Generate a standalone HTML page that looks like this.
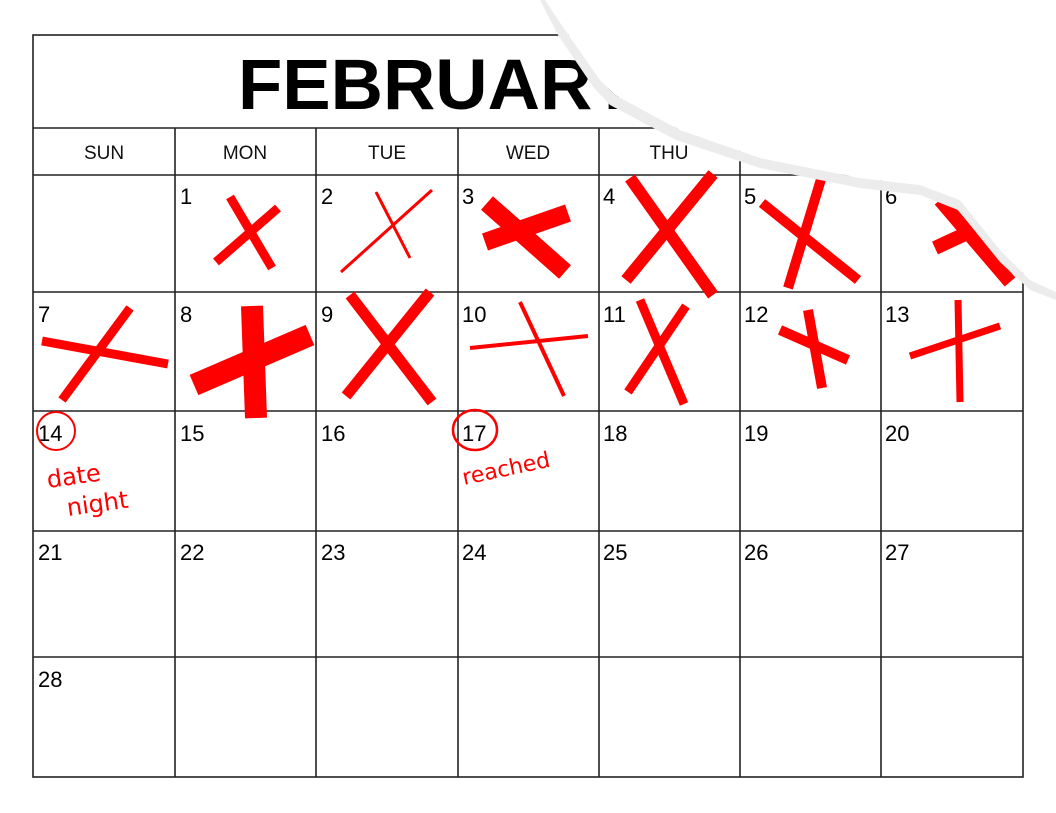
<!DOCTYPE html>
<html><head><meta charset="utf-8"><style>
html,body{margin:0;padding:0;background:#fff;width:1056px;height:813px;overflow:hidden}
svg{display:block}
</style></head><body>
<svg width="1056" height="813" viewBox="0 0 1056 813" xmlns="http://www.w3.org/2000/svg" font-family="Liberation Sans, Arial, sans-serif">
<rect width="1056" height="813" fill="#fff"/>
<g stroke="#222" stroke-width="1.6" fill="none">
<rect x="33" y="35" width="990" height="742"/>
<line x1="33" y1="128" x2="1023" y2="128"/>
<line x1="33" y1="175" x2="1023" y2="175"/>
<line x1="33" y1="292" x2="1023" y2="292"/>
<line x1="33" y1="411" x2="1023" y2="411"/>
<line x1="33" y1="531" x2="1023" y2="531"/>
<line x1="33" y1="657" x2="1023" y2="657"/>
<line x1="175" y1="128" x2="175" y2="777"/>
<line x1="316" y1="128" x2="316" y2="777"/>
<line x1="458" y1="128" x2="458" y2="777"/>
<line x1="599" y1="128" x2="599" y2="777"/>
<line x1="740" y1="128" x2="740" y2="777"/>
<line x1="881" y1="128" x2="881" y2="777"/>
</g>
<text x="238" y="109" font-size="71" font-weight="bold" fill="#000" textLength="400" lengthAdjust="spacingAndGlyphs">FEBRUARY</text>
<g font-size="19" text-anchor="middle" fill="#111">
<text x="104" y="159">SUN</text><text x="245" y="159">MON</text><text x="387" y="159">TUE</text><text x="528" y="159">WED</text><text x="669" y="159">THU</text><text x="810" y="159">FRI</text><text x="952" y="159">SAT</text>
</g>
<g font-size="22" fill="#000">
<text x="180" y="204">1</text><text x="321" y="204">2</text><text x="462" y="204">3</text><text x="603" y="204">4</text><text x="744" y="204">5</text><text x="885" y="204">6</text>
<text x="38" y="322">7</text><text x="180" y="322">8</text><text x="321" y="322">9</text><text x="462" y="322">10</text><text x="603" y="322">11</text><text x="744" y="322">12</text><text x="885" y="322">13</text>
<text x="38" y="441">14</text><text x="180" y="441">15</text><text x="321" y="441">16</text><text x="462" y="441">17</text><text x="603" y="441">18</text><text x="744" y="441">19</text><text x="885" y="441">20</text>
<text x="38" y="560">21</text><text x="180" y="560">22</text><text x="321" y="560">23</text><text x="462" y="560">24</text><text x="603" y="560">25</text><text x="744" y="560">26</text><text x="885" y="560">27</text>
<text x="38" y="687">28</text>
</g>
<g stroke="#f00" stroke-linecap="butt" fill="none">
<path d="M230 197 L272 268 M278 208 L216 262" stroke-width="9"/>
<path d="M376 192 L410 258 M432 190 L341 272" stroke-width="3"/>
<path d="M487 203 L565 272 M568 213 L485 242" stroke-width="18"/>
<path d="M630 178 L713 295 M713 174 L626 280" stroke-width="12"/>
<path d="M762 203 L858 280 M822 176 L788 288" stroke-width="10"/>
<path d="M940 200 L1010 282 M935 248 L978 228" stroke-width="14"/>
<path d="M42 341 L168 364 M130 308 L62 400" stroke-width="9"/>
<path d="M252 306 L256 418 M194 385 L310 335" stroke-width="22"/>
<path d="M350 295 L432 402 M430 292 L346 396" stroke-width="11"/>
<path d="M470 348 L588 336 M520 302 L564 396" stroke-width="4"/>
<path d="M640 300 L684 404 M686 306 L628 392" stroke-width="9"/>
<path d="M780 330 L848 360 M808 310 L822 388" stroke-width="10"/>
<path d="M910 356 L1000 326 M958 300 L960 402" stroke-width="7"/>
<circle cx="56" cy="431" r="19" stroke-width="2"/>
<ellipse cx="475" cy="430" rx="22" ry="20" stroke-width="2.5"/>
</g>
<g fill="#f00" font-family="DejaVu Sans, sans-serif" font-size="24">
<text x="48" y="488" transform="rotate(-8 48 488)">date</text>
<text x="68" y="516" transform="rotate(-8 68 516)">night</text>
<text x="464" y="485" font-size="22" transform="rotate(-12 464 485)">reached</text>
</g>
<path d="M545 0 L565 30 L600 80 L615 95 L680 130 L760 158 L860 178 L920 185 L960 200 L1000 250 L1030 280 L1056 292 L1056 300 L1030 290 L1000 262 L958 210 L920 195 L860 188 L760 168 L676 140 L610 105 L594 88 L558 35 L540 0 Z" fill="#ececec"/>
<path d="M545 0 L565 30 L600 80 L615 95 L680 130 L760 158 L860 178 L920 185 L960 200 L1000 250 L1030 280 L1056 292 L1056 0 Z" fill="#fff"/>
</svg>
</body></html>
